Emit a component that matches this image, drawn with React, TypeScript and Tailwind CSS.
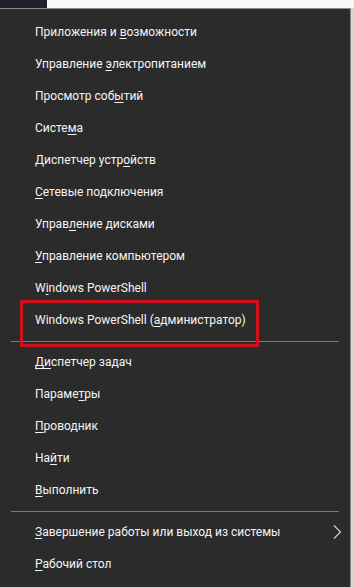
type Item = {
  label: string;
  // index and length of the access-key letters that get underlined
  key: [number, number];
  submenu?: boolean;
  highlighted?: boolean;
};

const groups: Item[][] = [
  [
    { label: "Приложения и возможности", key: [13, 1] },
    { label: "Управление электропитанием", key: [11, 1] },
    { label: "Просмотр событий", key: [12, 1] },
    { label: "Система", key: [5, 1] },
    { label: "Диспетчер устройств", key: [14, 1] },
    { label: "Сетевые подключения", key: [0, 1] },
    { label: "Управление дисками", key: [5, 1] },
    { label: "Управление компьютером", key: [0, 1] },
    { label: "Windows PowerShell", key: [1, 1] },
    { label: "Windows PowerShell (администратор)", key: [20, 1], highlighted: true },
  ],
  [
    { label: "Диспетчер задач", key: [0, 2] },
    { label: "Параметры", key: [6, 1] },
    { label: "Проводник", key: [0, 1] },
    { label: "Найти", key: [2, 1] },
    { label: "Выполнить", key: [0, 1] },
  ],
  [
    { label: "Завершение работы или выход из системы", key: [0, 1], submenu: true },
    { label: "Рабочий стол", key: [0, 1] },
  ],
];

const Label = ({ label, keyRange }: { label: string; keyRange: [number, number] }) => {
  const [start, len] = keyRange;
  return (
    <span>
      {label.slice(0, start)}
      <span className="underline decoration-1 underline-offset-[2px]">
        {label.slice(start, start + len)}
      </span>
      {label.slice(start + len)}
    </span>
  );
};

const MenuRow = ({ item }: { item: Item }) => (
  <div className="relative flex h-[32px] items-center justify-between pl-[35px] pr-[8px]">
    <Label label={item.label} keyRange={item.key} />
    {item.submenu && (
      <svg width="10" height="16" viewBox="0 0 10 16" className="text-[#cfcfcf]">
        <path d="M2 1.5 L8.5 8 L2 14.5" fill="none" stroke="currentColor" strokeWidth="1.2" />
      </svg>
    )}
    {item.highlighted && (
      <div className="pointer-events-none absolute left-[20px] top-[-4px] h-[47px] w-[239px] border-[3px] border-[#d0111b]" />
    )}
  </div>
);

export default function App() {
  return (
    <div
      className="flex h-[588px] w-[354px] flex-col bg-[#d6d6d6] text-[12px] text-[#f4f4f4]"
      style={{ fontFamily: 'Roboto, "Liberation Sans", sans-serif' }}
    >
      <div className="flex h-[8px] shrink-0">
        <div className="w-[47px] bg-[#1e212d]" />
        <div className="flex-1 bg-[#f7f7f7]" />
      </div>
      <div className="mb-[1px] mr-[3px] flex flex-1 flex-col border-t border-r border-[#8a8a8a] bg-[#2b2b2b] pt-[7px]">
        {groups.map((group, gi) => (
          <div key={gi}>
            {gi > 0 && (
              <div className="flex h-[10px] items-center px-[11px]">
                <div className="h-px flex-1 bg-[#7b7b7b]" />
              </div>
            )}
            {group.map((item) => (
              <MenuRow key={item.label} item={item} />
            ))}
          </div>
        ))}
      </div>
    </div>
  );
}
